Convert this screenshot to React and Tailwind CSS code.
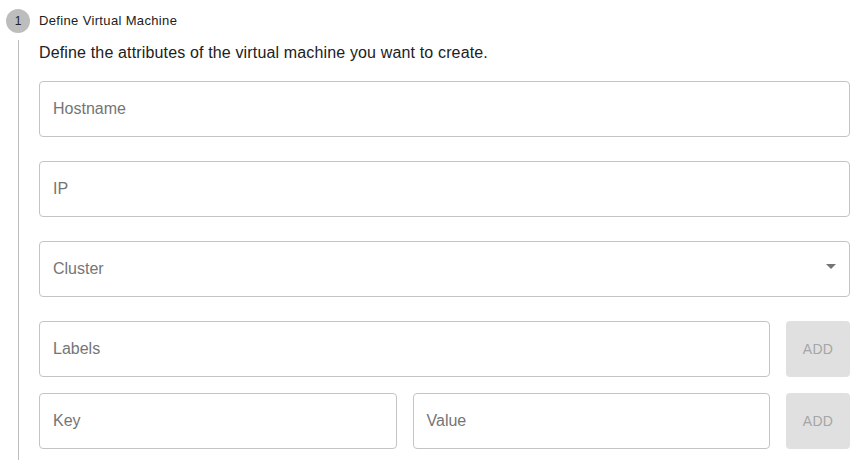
import React from 'react';

const Field = ({ label, className = '', select = false }) => (
  <div className={`relative h-[56px] rounded-[4px] border border-[#c4c4c4] bg-white flex items-center pl-[13px] ${className}`}>
    <span className="text-[16px] text-[#757575]">{label}</span>
    {select && (
      <svg className="absolute right-[13px] top-[22px]" width="10" height="5" viewBox="0 0 10 5">
        <path d="M0 0 L10 0 L5 5 Z" fill="#757575" />
      </svg>
    )}
  </div>
);

const AddButton = () => (
  <button className="w-[64px] h-[56px] shrink-0 rounded-[4px] bg-[#e0e0e0] text-[14px] text-[#a6a6a6] tracking-[0.3px]">
    ADD
  </button>
);

export default function App() {
  return (
    <div className="w-[862px] h-[460px] overflow-hidden bg-white pl-[6px] pt-[9px] font-['Liberation_Sans',Arial,sans-serif]">
      <div className="flex items-center">
        <div className="w-[24px] h-[24px] rounded-full bg-[#bdbdbd] flex items-center justify-center text-[12px] text-[#212121]">
          1
        </div>
        <span className="ml-[9px] text-[13px] tracking-[0.35px] text-[#212121]">Define Virtual Machine</span>
      </div>
      <div className="ml-[12px] mt-[7px] border-l border-[#bdbdbd] pl-[20px] pr-[12px] h-[500px]">
        <p className="pt-[1px] text-[16px] leading-[24px] tracking-[0.15px] text-[#212121]">
          Define the attributes of the virtual machine you want to create.
        </p>
        <div className="mt-[16px] flex flex-col gap-[24px]">
          <Field label="Hostname" />
          <Field label="IP" />
          <Field label="Cluster" select />
        </div>
        <div className="mt-[24px] flex gap-[16px]">
          <Field label="Labels" className="flex-1" />
          <AddButton />
        </div>
        <div className="mt-[16px] flex gap-[16px]">
          <Field label="Key" className="flex-1" />
          <Field label="Value" className="flex-1" />
          <AddButton />
        </div>
      </div>
    </div>
  );
}
